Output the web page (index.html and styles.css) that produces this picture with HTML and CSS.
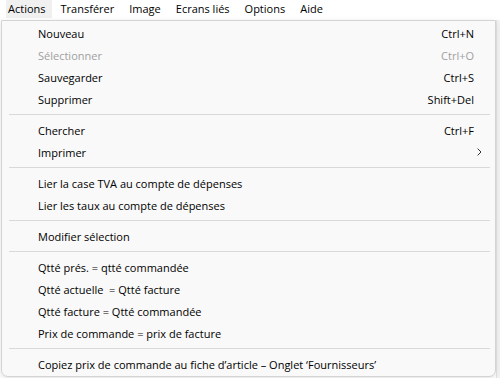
FILE: index.html
```html
<!DOCTYPE html>
<html lang="fr">
<head>
<meta charset="utf-8">
<title>Menu Actions</title>
<link rel="stylesheet" href="styles.css">
</head>
<body>
<div class="app">
  <nav class="menubar">
    <span class="mb-item active">Actions</span>
    <span class="mb-item">Transférer</span>
    <span class="mb-item">Image</span>
    <span class="mb-item">Ecrans liés</span>
    <span class="mb-item">Options</span>
    <span class="mb-item">Aide</span>
  </nav>
  <div class="popup">
    <div class="item"><span class="label">Nouveau</span><span class="key">Ctrl+N</span></div>
    <div class="item disabled"><span class="label">Sélectionner</span><span class="key">Ctrl+O</span></div>
    <div class="item"><span class="label">Sauvegarder</span><span class="key">Ctrl+S</span></div>
    <div class="item"><span class="label">Supprimer</span><span class="key">Shift+Del</span></div>
    <div class="sep"></div>
    <div class="item"><span class="label">Chercher</span><span class="key">Ctrl+F</span></div>
    <div class="item"><span class="label">Imprimer</span><svg class="chev" width="5" height="8" viewBox="0 0 5 8"><path d="M0.6 0.6 L4 4 L0.6 7.4" fill="none" stroke="#333" stroke-width="1"/></svg></div>
    <div class="sep"></div>
    <div class="item"><span class="label">Lier la case TVA au compte de dépenses</span></div>
    <div class="item"><span class="label">Lier les taux au compte de dépenses</span></div>
    <div class="sep"></div>
    <div class="item"><span class="label">Modifier sélection</span></div>
    <div class="sep"></div>
    <div class="item"><span class="label">Qtté prés. = qtté commandée</span></div>
    <div class="item"><span class="label">Qtté actuelle &nbsp;= Qtté facture</span></div>
    <div class="item"><span class="label">Qtté facture = Qtté commandée</span></div>
    <div class="item"><span class="label">Prix de commande = prix de facture</span></div>
    <div class="sep"></div>
    <div class="item"><span class="label">Copiez prix de commande au fiche d’article – Onglet ‘Fournisseurs’</span></div>
  </div>
  <div class="behind"></div>
</div>
</body>
</html>
```
FILE: styles.css
```css
* { box-sizing: border-box; }
html, body {
  margin: 0;
  padding: 0;
  background: #ffffff;
  width: 500px;
  height: 378px;
  overflow: hidden;
}
body {
  font-family: "Open Sans", "Noto Sans", "Liberation Sans", sans-serif;
  font-size: 11px;
  color: #000;
}
.app {
  position: relative;
  width: 500px;
  height: 378px;
}
.menubar {
  display: flex;
  gap: 15px;
  height: 20px;
  padding-left: 8px;
  align-items: flex-start;
}
.mb-item {
  height: 18px;
  line-height: 18px;
  white-space: nowrap;
}
.mb-item.active {
  background: #f0f0f0;
  padding: 0 6px 0 2px;
  margin: 0 -6px 0 -2px;
}
.popup {
  position: relative;
  z-index: 2;
  margin-left: 1px;
  width: 495px;
  background: #f9f9f9;
  border: 1px solid #d4d4d4;
  border-radius: 0 0 7px 7px;
  padding: 1px 0;
  box-shadow: 0 2px 6px rgba(0,0,0,0.12);
}
.item {
  display: flex;
  align-items: center;
  justify-content: space-between;
  height: 22px;
  padding: 0 21px 0 36px;
  white-space: nowrap;
}
.item.disabled { color: #a0a0a0; }
.key { text-align: right; }
.chev { margin-right: -8px; }
.sep {
  height: 9px;
  padding-top: 4px;
  margin: 0 5px 0 7px;
}
.sep::before {
  content: "";
  display: block;
  height: 1px;
  background: #d9d9d9;
}
.behind {
  position: absolute;
  right: 0;
  top: 20px;
  width: 4px;
  bottom: 0;
  border-left: 1px solid #e6e6e6;
  background: #f3f3f3;
}
```
